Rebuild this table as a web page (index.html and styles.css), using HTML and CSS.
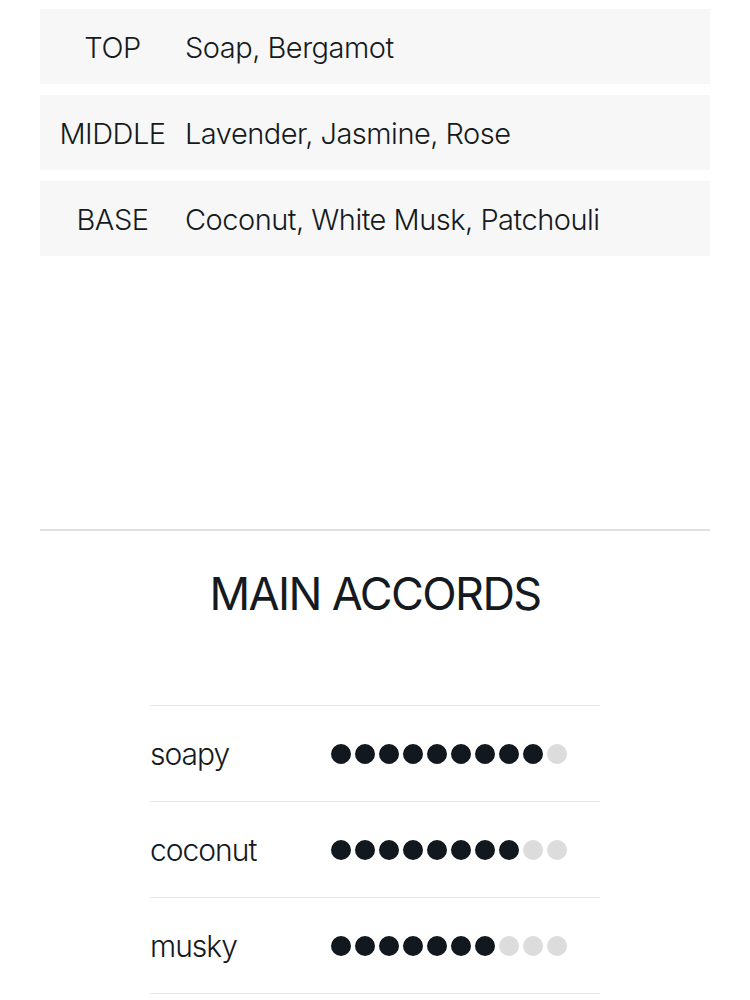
FILE: index.html
```html
<!DOCTYPE html>
<html>
<head>
<meta charset="utf-8">
<link rel="stylesheet" href="styles.css">
</head>
<body>
<div class="page">
  <div class="notes">
    <div class="note-row"><div class="note-label">TOP</div><div class="note-value">Soap, Bergamot</div></div>
    <div class="note-row"><div class="note-label">MIDDLE</div><div class="note-value">Lavender, Jasmine, Rose</div></div>
    <div class="note-row"><div class="note-label">BASE</div><div class="note-value">Coconut, White Musk, Patchouli</div></div>
  </div>
  <div class="section">
    <h2 class="section-title">MAIN ACCORDS</h2>
    <div class="accords">
      <div class="accord">
        <div class="accord-name">soapy</div>
        <div class="dots"><span class="dot on"></span><span class="dot on"></span><span class="dot on"></span><span class="dot on"></span><span class="dot on"></span><span class="dot on"></span><span class="dot on"></span><span class="dot on"></span><span class="dot on"></span><span class="dot"></span></div>
      </div>
      <div class="accord">
        <div class="accord-name">coconut</div>
        <div class="dots"><span class="dot on"></span><span class="dot on"></span><span class="dot on"></span><span class="dot on"></span><span class="dot on"></span><span class="dot on"></span><span class="dot on"></span><span class="dot on"></span><span class="dot"></span><span class="dot"></span></div>
      </div>
      <div class="accord">
        <div class="accord-name">musky</div>
        <div class="dots"><span class="dot on"></span><span class="dot on"></span><span class="dot on"></span><span class="dot on"></span><span class="dot on"></span><span class="dot on"></span><span class="dot on"></span><span class="dot"></span><span class="dot"></span><span class="dot"></span></div>
      </div>
    </div>
  </div>
</div>
</body>
</html>
```
FILE: styles.css
```css
html, body {
  margin: 0;
  padding: 0;
  background: #ffffff;
}
body {
  font-family: Inter, "Noto Sans", sans-serif;
  color: #141a20;
}
.page {
  padding: 9px 40px 0;
}
.notes {
  display: flex;
  flex-direction: column;
  gap: 11px;
}
.note-row {
  display: flex;
  align-items: center;
  height: 75px;
  background: #f7f7f7;
  font-size: 29px;
  font-weight: 300;
  letter-spacing: -0.5px;
  padding-top: 2px;
  box-sizing: border-box;
}
.note-label {
  width: 145px;
  text-align: center;
}
.section {
  margin-top: 273px;
  border-top: 2px solid #e0e0e0;
}
.section-title {
  margin: 36px 0 0;
  text-align: center;
  font-size: 45px;
  font-weight: 400;
  line-height: 54px;
  letter-spacing: -1.6px;
}
.accords {
  width: 450px;
  margin: 84px auto 0;
}
.accord {
  display: flex;
  align-items: center;
  height: 95px;
  border-top: 1px solid #e8e8e8;
}
.accord:last-child {
  border-bottom: 1px solid #e8e8e8;
}
.accord-name {
  width: 181px;
  font-size: 30px;
  font-weight: 300;
  letter-spacing: -1px;
  padding-top: 1px;
}
.dots {
  display: flex;
  gap: 4px;
}
.dot {
  width: 20px;
  height: 20px;
  border-radius: 50%;
  background: #dcdcdc;
}
.dot.on {
  background: #111820;
}
```
